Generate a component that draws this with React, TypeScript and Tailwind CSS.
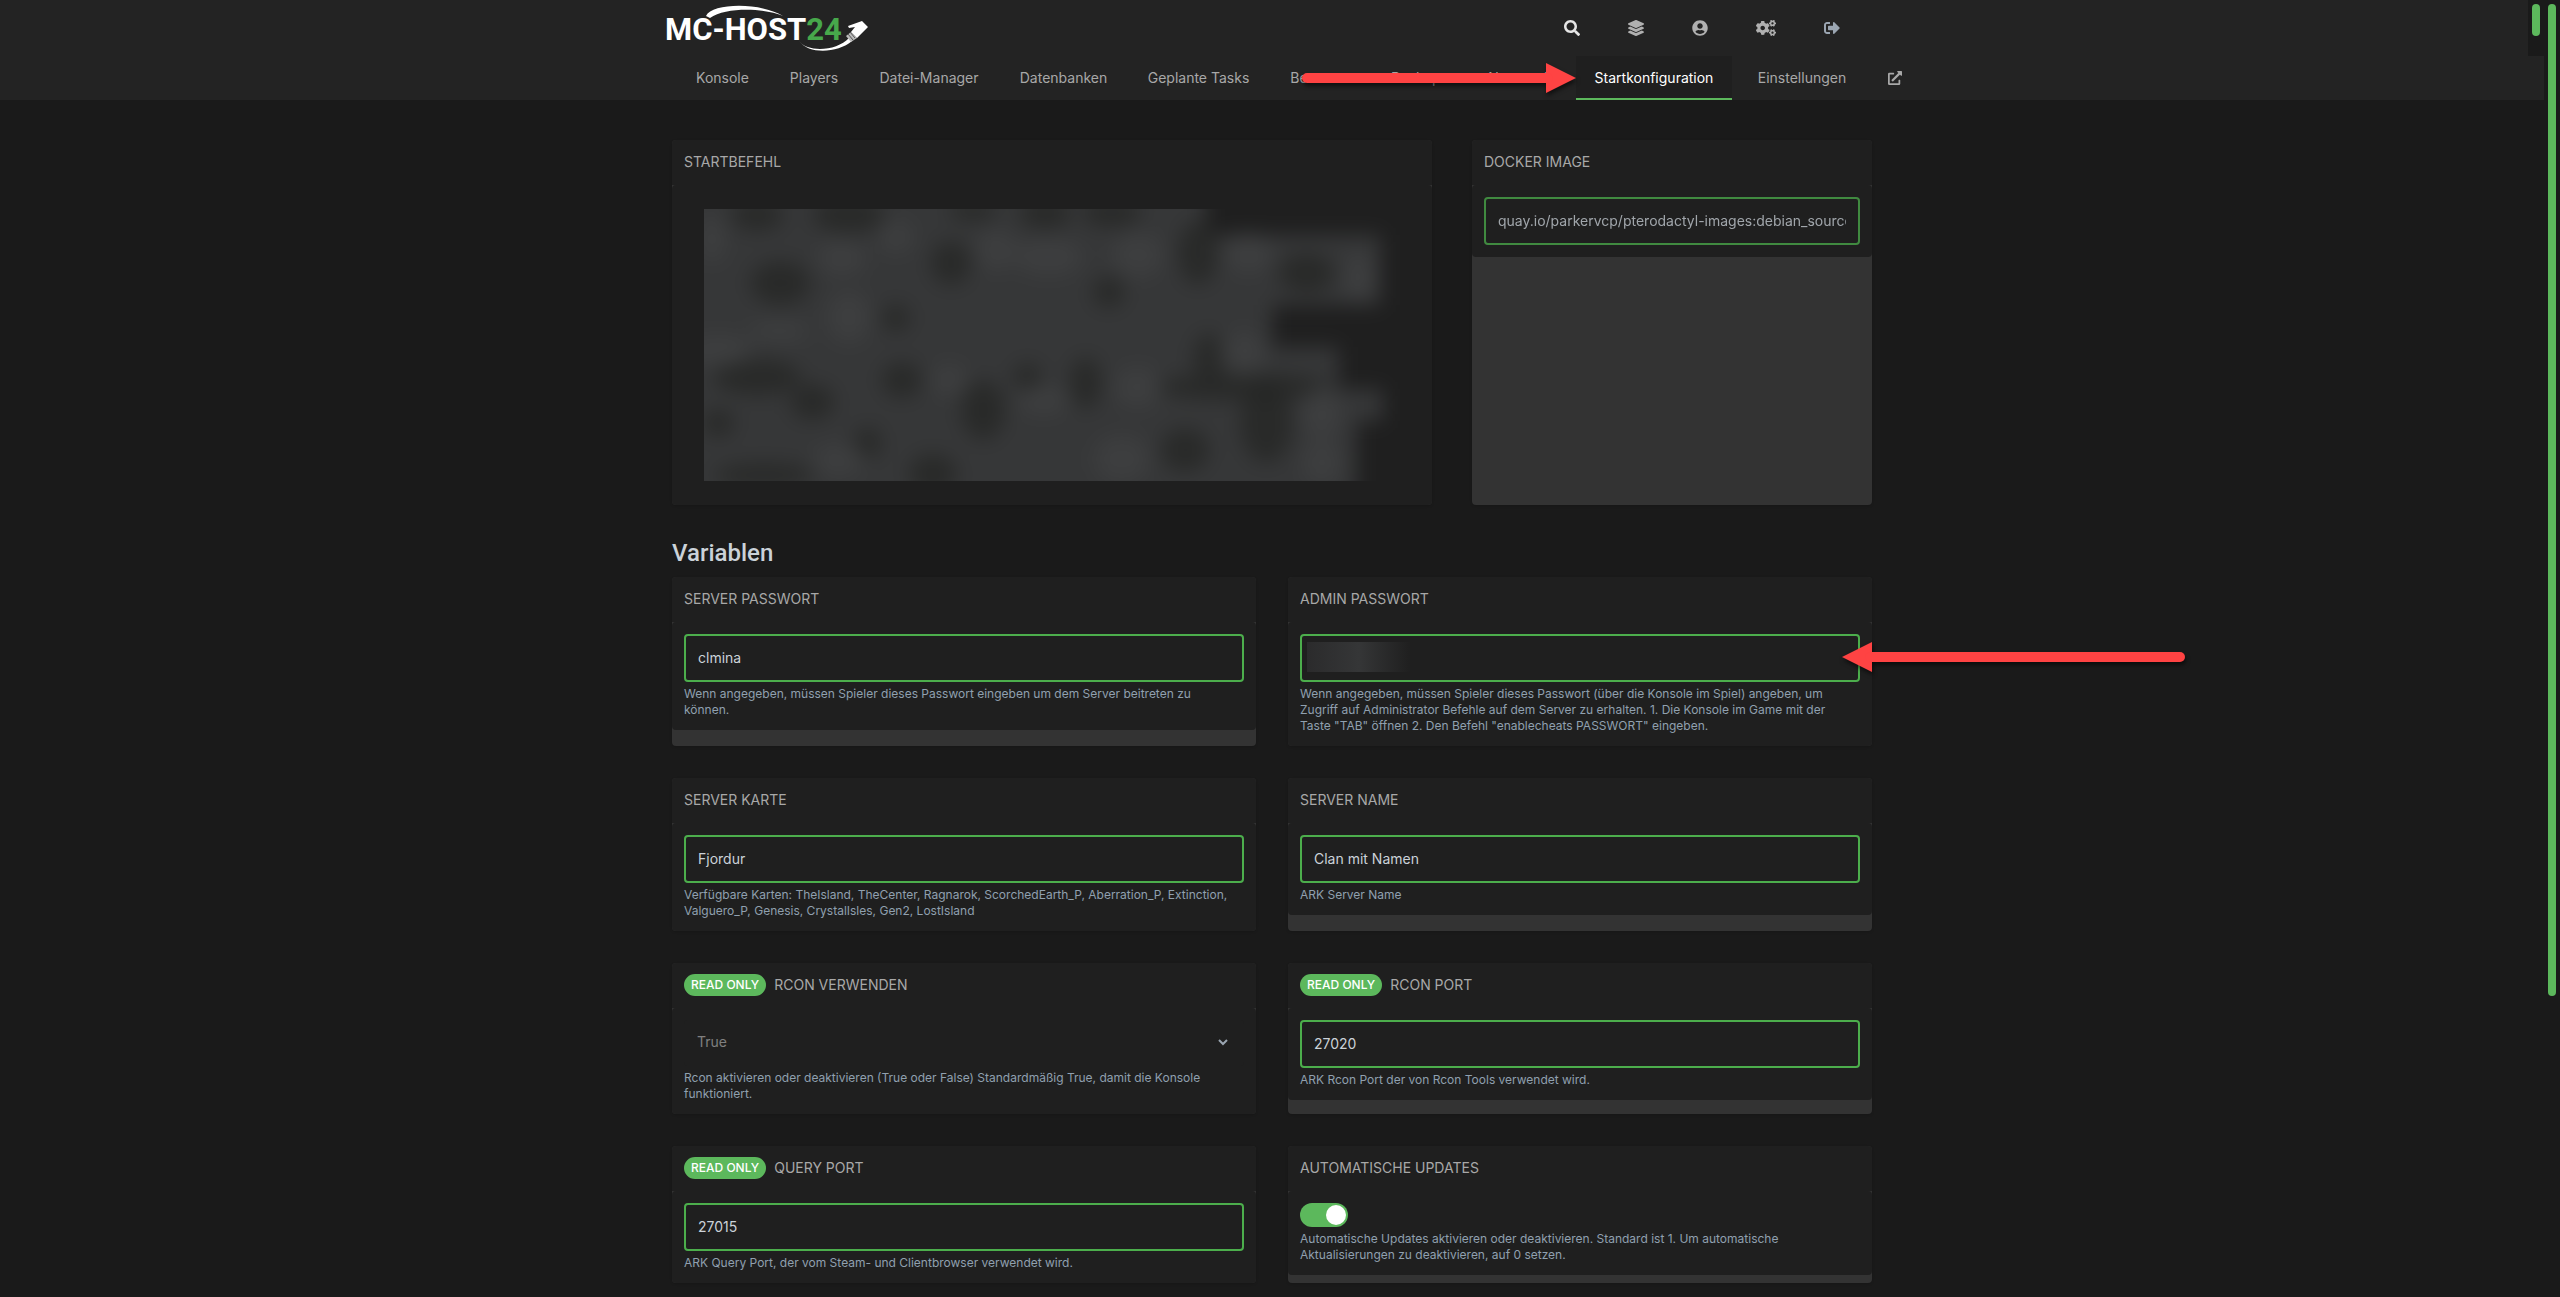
import React from 'react';
import { FaSearch, FaLayerGroup, FaUserCircle, FaCogs, FaSignOutAlt, FaExternalLinkAlt } from 'react-icons/fa';

const tabs = [
  { label: 'Konsole', width: 'min-w-[85px]' },
  { label: 'Players', width: 'min-w-[82px]' },
  { label: 'Datei-Manager', width: 'min-w-[132px]' },
  { label: 'Datenbanken', width: 'min-w-[121px]' },
  { label: 'Geplante Tasks', width: 'min-w-[133px]' },
  { label: 'Benutzer', width: 'min-w-[94px]' },
  { label: 'Backups', width: 'min-w-[89px]' },
  { label: 'Netzwerk', width: 'min-w-[96px]' },
  { label: 'Startkonfiguration', width: 'min-w-[156px]', active: true },
  { label: 'Einstellungen', width: 'min-w-[124px]' },
];

function Logo() {
  return (
    <svg className="h-14 w-[216px]" viewBox="4 0 216 56" role="img" aria-label="MC-HOST24">
      <path d="M46 16 C52 3 100 2 123 16 C104 8 66 7 50 18 Z" fill="#fff" />
      <text x="5" y="40" fill="#fff" fontFamily="Roboto, sans-serif" fontWeight="700" fontSize="31">
        MC-HOST<tspan fill="#47a84b">24</tspan>
      </text>
      <path d="M139 41 C148 53 177 51 189 38 L192 41 C178 53 149 55 139 41 Z" fill="#fff" />
      <path d="M186 36 L191 32 L197 38 L191 42 Z" fill="#bbb" />
      <path d="M188 34 L193 40 M190 32 L195 38" stroke="#555" strokeWidth="1" />
      <path d="M202 21 L208 27 L197 38 L191 32 L195 27 L189 28 L188 26 Z" fill="#fff" />
    </svg>
  );
}

function Arrow({ left = false, width, className }: { left?: boolean; width: number; className: string }) {
  const head = left ? `30,5 0,20 30,35` : `${width - 30},5 ${width},20 ${width - 30},35`;
  return (
    <svg
      className={'pointer-events-none absolute z-10 h-10 overflow-visible drop-shadow-[1px_3px_2px_rgba(0,0,0,0.55)] ' + className}
      viewBox={`0 0 ${width} 40`}
      aria-hidden="true"
    >
      <polygon points={head} fill="#ff4343" />
      <line x1={left ? 28 : 5} x2={left ? width - 5 : width - 28} y1="20" y2="20" stroke="#ff4343" strokeWidth="10" strokeLinecap="round" />
    </svg>
  );
}

const dark: [number, number, number, number][] = [
  [246, 54, 20, 22], [492, 44, 20, 32], [403, 83, 16, 16], [76, 74, 30, 22], [191, 109, 14, 14],
  [197, 171, 20, 18], [108, 193, 22, 18], [278, 201, 22, 30], [380, 174, 16, 26], [560, 214, 26, 40],
  [537, 178, 90, 14], [479, 241, 24, 22], [228, 265, 24, 20], [53, 168, 44, 18], [14, 214, 16, 14],
  [53, 6, 26, 16], [144, 6, 36, 18], [340, 4, 26, 16], [406, 4, 30, 14], [268, 2, 24, 10],
  [163, 234, 14, 16], [322, 168, 14, 14], [503, 148, 16, 24], [600, 64, 28, 20], [60, 266, 50, 12],
];
const light: [number, number, number, number][] = [
  [137, 49, 24, 18], [191, 28, 18, 16], [343, 48, 34, 18], [432, 46, 26, 22], [291, 41, 20, 20],
  [14, 141, 34, 16], [652, 68, 14, 24], [537, 144, 22, 22], [338, 191, 26, 14], [432, 178, 24, 20],
  [144, 108, 22, 26], [134, 251, 26, 16], [416, 250, 28, 24], [615, 204, 20, 26], [542, 44, 24, 20],
  [615, 254, 20, 22], [244, 171, 18, 16], [8, 30, 14, 24], [75, 122, 30, 10],
];

function RedactedCommand() {
  return (
    <svg className="block h-[272px] w-full" viewBox="0 0 693 272" preserveAspectRatio="none" aria-hidden="true">
      <defs>
        <filter id="soften" filterUnits="userSpaceOnUse" x="-80" y="-80" width="860" height="440" colorInterpolationFilters="sRGB">
          <feGaussianBlur stdDeviation="10" />
        </filter>
      </defs>
      <g filter="url(#soften)">
        <rect x="-80" y="-80" width="860" height="440" fill="#1f1f1f" />
        <path d="M-80 -80 H500 V26 H674 V96 H566 V138 H632 V180 H676 V212 H650 V360 H-80 Z" fill="#363738" />
        {dark.map(([x, y, rx, ry]) => (
          <ellipse key={`${x}-${y}`} cx={x} cy={y} rx={rx} ry={ry} fill="#232524" opacity="0.7" />
        ))}
        {light.map(([x, y, rx, ry]) => (
          <ellipse key={`${x}-${y}`} cx={x} cy={y} rx={rx} ry={ry} fill="#404143" opacity="0.7" />
        ))}
      </g>
    </svg>
  );
}

function Card({ title, id, readOnly, fill, children }: {
  title: string; id?: string; readOnly?: boolean; fill?: boolean; children: React.ReactNode;
}) {
  return (
    <section className="flex flex-col rounded bg-[#333333] shadow-sm">
      <header className="rounded-t border-b border-[#1f1f1f] bg-[#1f1f1f] p-3">
        <div className="flex h-5 items-center gap-2 text-sm text-[#a8a8a8] uppercase">
          {readOnly && (
            <span className="rounded-full bg-[#5cb85c] px-[7px] py-[3px] text-xs leading-4 font-medium text-white">Read Only</span>
          )}
          {id ? <label htmlFor={id}>{title}</label> : <h2>{title}</h2>}
        </div>
      </header>
      <div className={(fill ? 'grow ' : '') + 'rounded bg-[#1f1f1f] p-3'}>{children}</div>
    </section>
  );
}

const box = 'block h-12 w-full rounded border-2 border-[#4cae4c] bg-[#1f1f1f] px-3 pb-[2px] text-sm text-[#cbd2d9] outline-none';

function Field({ id, value }: { id: string; value: string }) {
  return <input id={id} type="text" className={box} defaultValue={value} />;
}

function Hint({ children }: { children: React.ReactNode }) {
  return <p className="mt-1 pr-3 text-xs text-[#90a0af]">{children}</p>;
}

export default function App() {
  return (
    <div className="flex min-h-screen bg-[#1a1a1a] font-['Inter','Open_Sans',sans-serif] text-[#a8a8a8]">
      <div className="min-w-0 grow">
        <div className="flex h-14">
          <div className="grow bg-[#232323]">
            <div className="mx-auto flex h-14 max-w-[1200px] items-center justify-between">
              <a href="#home"><Logo /></a>
              <nav className="flex h-14 items-center gap-12 pr-6 text-base text-[#b0b0b0]" aria-label="Konto">
                <button aria-label="Suche" className="text-[#e5e5e5]"><FaSearch /></button>
                <a href="#server" aria-label="Server"><FaLayerGroup /></a>
                <a href="#account" aria-label="Konto"><FaUserCircle /></a>
                <a href="#admin" aria-label="Admin"><FaCogs size={20} className="h-4 w-5" /></a>
                <button aria-label="Abmelden" className="text-[#9aa5b1]"><FaSignOutAlt /></button>
              </nav>
            </div>
          </div>
          <div className="w-4 px-1 py-1"><div className="h-8 rounded-full bg-[#5cb85c]" /></div>
        </div>

        <div className="bg-[#232323]">
          <nav className="mx-auto flex h-11 max-w-[1200px] gap-2 pl-2 text-sm text-[#a8a8a8]" aria-label="Server">
            {tabs.map((t) => (
              <div
                key={t.label}
                className={
                  'relative flex items-center justify-center ' + t.width +
                  (t.active ? ' bg-[#1f1f1f] text-white shadow-[inset_0_-2px_#5cb85c]' : '')
                }
              >
                <a href={'#' + t.label}>{t.label}</a>
                {t.active && <Arrow width={274} className="right-full w-[274px]" />}
              </div>
            ))}
            <a href="#extern" aria-label="Extern öffnen" className="flex items-center px-4"><FaExternalLinkAlt size={14} /></a>
          </nav>
        </div>

        <main className="mx-auto max-w-[1200px] pt-10">
          <div className="grid grid-cols-[minmax(0,19fr)_minmax(0,10fr)] gap-10">
            <Card title="Startbefehl" fill>
              <div className="px-5 py-3"><RedactedCommand /></div>
            </Card>
            <Card title="Docker Image" id="docker">
              <input
                id="docker"
                disabled
                className="block h-12 w-full rounded border-2 border-[#4cae4c] bg-[#1f1f1f] px-3 pb-[2px] text-sm text-[#cbd2d9] opacity-75"
                defaultValue="quay.io/parkervcp/pterodactyl-images:debian_source"
              />
            </Card>
          </div>

          <h1 className="mt-8 mb-2 font-['Roboto',sans-serif] text-2xl font-medium text-[#cbd2d9]">Variablen</h1>

          <div className="grid grid-cols-2 gap-8">
            <Card title="Server Passwort" id="pw">
              <Field id="pw" value="clmina" />
              <Hint>Wenn angegeben, müssen Spieler dieses Passwort eingeben um dem Server beitreten zu können.</Hint>
            </Card>
            <Card title="Admin Passwort" id="admin-pw">
              <div className="relative">
                <Field id="admin-pw" value="" />
                <div className="pointer-events-none absolute top-2 left-[7px] h-[30px] w-[104px] bg-linear-to-r from-[#2b2b2c] via-[#353637] via-50% to-[#1f1f1f]" />
                <Arrow left width={343} className="top-[3px] left-[calc(100%-18px)] w-[343px]" />
              </div>
              <Hint>
                Wenn angegeben, müssen Spieler dieses Passwort (über die Konsole im Spiel) angeben, um Zugriff auf
                Administrator Befehle auf dem Server zu erhalten. 1. Die Konsole im Game mit der Taste "TAB" öffnen 2. Den
                Befehl "enablecheats PASSWORT" eingeben.
              </Hint>
            </Card>
            <Card title="Server Karte" id="map">
              <Field id="map" value="Fjordur" />
              <Hint>
                Verfügbare Karten: TheIsland, TheCenter, Ragnarok, ScorchedEarth_P, Aberration_P, Extinction, Valguero_P,
                Genesis, CrystalIsles, Gen2, LostIsland
              </Hint>
            </Card>
            <Card title="Server Name" id="name">
              <Field id="name" value="Clan mit Namen" />
              <Hint>ARK Server Name</Hint>
            </Card>
            <Card title="Rcon verwenden" id="rcon" readOnly>
              <div className="relative">
                <select
                  id="rcon"
                  disabled
                  className="block h-[46px] w-full appearance-none rounded bg-[#1f1f1f] px-[13px] pb-[2px] text-sm text-[#808080] opacity-100"
                >
                  <option>True</option>
                  <option>False</option>
                </select>
                <svg className="pointer-events-none absolute top-[15px] right-[13px] h-4 w-4" viewBox="0 0 16 16" fill="none" aria-hidden="true">
                  <path d="M4 5 L8 9 L12 5" stroke="#9aa5b1" strokeWidth="2" />
                </svg>
              </div>
              <Hint>Rcon aktivieren oder deaktivieren (True oder False) Standardmäßig True, damit die Konsole funktioniert.</Hint>
            </Card>
            <Card title="Rcon Port" id="rcon-port" readOnly>
              <Field id="rcon-port" value="27020" />
              <Hint>ARK Rcon Port der von Rcon Tools verwendet wird.</Hint>
            </Card>
            <Card title="Query Port" id="query-port" readOnly>
              <Field id="query-port" value="27015" />
              <Hint>ARK Query Port, der vom Steam- und Clientbrowser verwendet wird.</Hint>
            </Card>
            <Card title="Automatische Updates" id="updates">
              <input
                id="updates"
                type="checkbox"
                role="switch"
                defaultChecked
                className="block h-6 w-12 appearance-none rounded-full bg-[#555555] p-[2px] before:block before:size-5 before:rounded-full before:bg-white checked:bg-[#5cb85c] checked:before:ml-6"
              />
              <Hint>
                Automatische Updates aktivieren oder deaktivieren. Standard ist 1. Um automatische Aktualisierungen zu
                deaktivieren, auf 0 setzen.
              </Hint>
            </Card>
          </div>
        </main>
      </div>
      <div className="w-4 shrink-0 px-1 pt-1"><div className="h-[992px] rounded-full bg-[#5cb85c]" /></div>
    </div>
  );
}
